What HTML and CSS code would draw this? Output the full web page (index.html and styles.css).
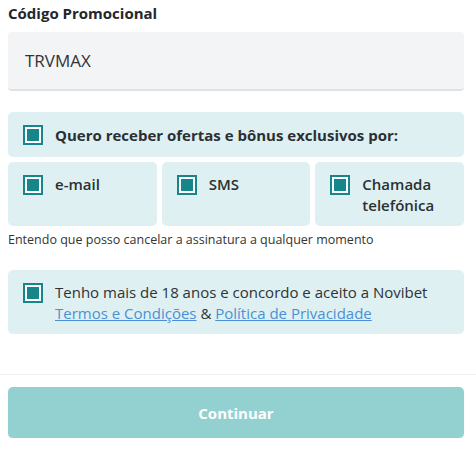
FILE: index.html
```html
<!DOCTYPE html>
<html lang="pt">
<head>
<meta charset="utf-8">
<link rel="stylesheet" href="styles.css">
</head>
<body>
<div class="page">
  <div class="label">Código Promocional</div>
  <div class="input">TRVMAX</div>

  <div class="box head">
    <span class="cb"></span>
    <span class="head-text">Quero receber ofertas e bônus exclusivos por:</span>
  </div>
  <div class="opts">
    <div class="box opt"><span class="cb"></span><span class="opt-text">e-mail</span></div>
    <div class="box opt"><span class="cb"></span><span class="opt-text">SMS</span></div>
    <div class="box opt"><span class="cb"></span><span class="opt-text">Chamada telefónica</span></div>
  </div>
  <div class="note">Entendo que posso cancelar a assinatura a qualquer momento</div>

  <div class="box terms">
    <span class="cb"></span>
    <span class="terms-text">Tenho mais de 18 anos e concordo e aceito a Novibet <a href="#">Termos e Condições</a> &amp; <a href="#">Política de Privacidade</a></span>
  </div>
</div>
<div class="footer">
  <button class="btn">Continuar</button>
</div>
</body>
</html>
```

FILE: styles.css
```css
* { box-sizing: border-box; }
html, body { margin: 0; padding: 0; background: #fff; }
body {
  font-family: "Open Sans", "Noto Sans", sans-serif;
  color: #2b2f33;
  width: 476px;
}
.page {
  padding: 3px 12px 0 8px;
  display: flex;
  flex-direction: column;
}
.label {
  font-weight: 700;
  font-size: 15px;
  line-height: 20px;
  color: #23272b;
}
.input {
  margin-top: 9px;
  height: 59px;
  background: #f3f4f6;
  border-radius: 4px;
  border-bottom: 2px solid #dfe2e5;
  padding: 0 17px;
  display: flex;
  align-items: center;
  font-size: 17px;
  color: #2f3336;
}
.box {
  background: #def0f1;
  border-radius: 5px;
  display: flex;
  align-items: flex-start;
}
.cb {
  flex: none;
  width: 20px;
  height: 20px;
  border: 2px solid #16868a;
  background: #fff;
  padding: 2px;
  display: flex;
}
.cb::before {
  content: "";
  flex: 1;
  background: #16868a;
}
.head {
  margin-top: 21px;
  height: 45px;
  align-items: center;
  padding: 0 15px;
  gap: 12px;
}
.head-text {
  font-weight: 700;
  font-size: 15px;
}
.opts {
  margin-top: 5px;
  display: grid;
  grid-template-columns: 1fr 1fr 1fr;
  gap: 5px;
}
.opt {
  height: 64px;
  padding: 13px 15px 0;
  gap: 12px;
}
.opt-text {
  font-size: 15px;
  font-weight: 600;
  line-height: 21px;
  margin-top: -1px;
}
.note {
  margin-top: 6px;
  font-size: 12.5px;
  line-height: 16px;
  color: #333;
}
.terms {
  margin-top: 22px;
  height: 64px;
  padding: 13px 15px 0;
  gap: 12px;
}
.terms-text {
  font-size: 15px;
  line-height: 21px;
  margin-top: -1px;
  color: #2f3336;
}
.terms-text a {
  color: #4b90d6;
  text-decoration: underline;
}
.footer {
  margin-top: 40px;
  border-top: 1px solid #eceeef;
  padding: 12px 12px 0 8px;
}
.btn {
  width: 100%;
  height: 51px;
  border: none;
  border-radius: 5px;
  background: #93d1d1;
  color: #fff;
  font-family: inherit;
  font-weight: 700;
  font-size: 15px;
  box-shadow: 0 1px 1px rgba(0,0,0,0.12);
}
```
